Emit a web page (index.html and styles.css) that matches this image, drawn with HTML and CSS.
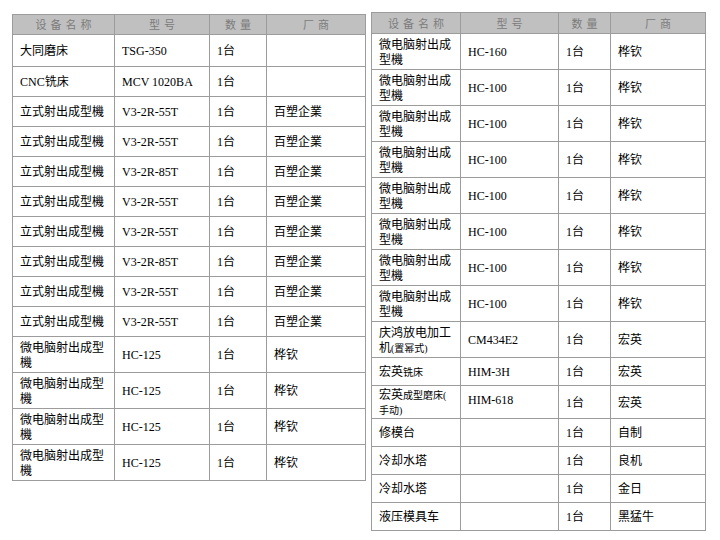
FILE: index.html
```html
<!DOCTYPE html>
<html lang="zh">
<head>
<meta charset="utf-8">
<title>设备清单</title>
<link rel="stylesheet" href="styles.css">
</head>
<body>
<div class="page">
  <table class="eq eq-left">
    <colgroup><col class="l1"><col class="l2"><col class="l3"><col class="l4"></colgroup>
    <thead>
      <tr class="hd-l"><th>设备名称</th><th>型号</th><th>数量</th><th>厂商</th></tr>
    </thead>
    <tbody>
      <tr class="r32"><td>大同磨床</td><td>TSG-350</td><td>1台</td><td></td></tr>
      <tr class="r30"><td>CNC铣床</td><td>MCV 1020BA</td><td>1台</td><td></td></tr>
      <tr class="r30"><td>立式射出成型機</td><td>V3-2R-55T</td><td>1台</td><td>百塑企業</td></tr>
      <tr class="r30"><td>立式射出成型機</td><td>V3-2R-55T</td><td>1台</td><td>百塑企業</td></tr>
      <tr class="r30"><td>立式射出成型機</td><td>V3-2R-85T</td><td>1台</td><td>百塑企業</td></tr>
      <tr class="r30"><td>立式射出成型機</td><td>V3-2R-55T</td><td>1台</td><td>百塑企業</td></tr>
      <tr class="r30"><td>立式射出成型機</td><td>V3-2R-55T</td><td>1台</td><td>百塑企業</td></tr>
      <tr class="r30"><td>立式射出成型機</td><td>V3-2R-85T</td><td>1台</td><td>百塑企業</td></tr>
      <tr class="r30"><td>立式射出成型機</td><td>V3-2R-55T</td><td>1台</td><td>百塑企業</td></tr>
      <tr class="r30"><td>立式射出成型機</td><td>V3-2R-55T</td><td>1台</td><td>百塑企業</td></tr>
      <tr class="r36"><td>微电脑射出成型機</td><td>HC-125</td><td>1台</td><td>桦钦</td></tr>
      <tr class="r36"><td>微电脑射出成型機</td><td>HC-125</td><td>1台</td><td>桦钦</td></tr>
      <tr class="r36"><td>微电脑射出成型機</td><td>HC-125</td><td>1台</td><td>桦钦</td></tr>
      <tr class="r36"><td>微电脑射出成型機</td><td>HC-125</td><td>1台</td><td>桦钦</td></tr>
    </tbody>
  </table>

  <table class="eq eq-right">
    <colgroup><col class="r1"><col class="r2"><col class="r3"><col class="r4"></colgroup>
    <thead>
      <tr class="hd-r"><th>设备名称</th><th>型号</th><th>数量</th><th>厂商</th></tr>
    </thead>
    <tbody>
      <tr class="r36"><td>微电脑射出成型機</td><td>HC-160</td><td>1台</td><td>桦钦</td></tr>
      <tr class="r36"><td>微电脑射出成型機</td><td>HC-100</td><td>1台</td><td>桦钦</td></tr>
      <tr class="r36"><td>微电脑射出成型機</td><td>HC-100</td><td>1台</td><td>桦钦</td></tr>
      <tr class="r36"><td>微电脑射出成型機</td><td>HC-100</td><td>1台</td><td>桦钦</td></tr>
      <tr class="r36"><td>微电脑射出成型機</td><td>HC-100</td><td>1台</td><td>桦钦</td></tr>
      <tr class="r36"><td>微电脑射出成型機</td><td>HC-100</td><td>1台</td><td>桦钦</td></tr>
      <tr class="r36"><td>微电脑射出成型機</td><td>HC-100</td><td>1台</td><td>桦钦</td></tr>
      <tr class="r36"><td>微电脑射出成型機</td><td>HC-100</td><td>1台</td><td>桦钦</td></tr>
      <tr class="r36"><td>庆鸿放电加工<br>机<span class="sm">(置幂式)</span></td><td>CM434E2</td><td>1台</td><td>宏英</td></tr>
      <tr class="r28"><td>宏英<span class="sm">铣床</span></td><td>HIM-3H</td><td>1台</td><td>宏英</td></tr>
      <tr class="r33"><td>宏英<span class="sm">成型磨床(<br>手动)</span></td><td class="top">HIM-618</td><td>1台</td><td>宏英</td></tr>
      <tr class="r28"><td>修模台</td><td></td><td>1台</td><td>自制</td></tr>
      <tr class="r28"><td>冷却水塔</td><td></td><td>1台</td><td>良机</td></tr>
      <tr class="r28"><td>冷却水塔</td><td></td><td>1台</td><td>金日</td></tr>
      <tr class="r28"><td>液压模具车</td><td></td><td>1台</td><td>黑猛牛</td></tr>
    </tbody>
  </table>
</div>
</body>
</html>
```

FILE: styles.css
```css
html, body {
  margin: 0;
  padding: 0;
  background: #ffffff;
}

.page {
  display: flex;
  align-items: flex-start;
  gap: 5px;
  padding-left: 12px;
}

.eq {
  table-layout: fixed;
  border-collapse: separate;
  border-spacing: 0;
  border-top: 1px solid #9c9c9c;
  border-left: 1px solid #9c9c9c;
  font-family: "Liberation Serif", "Noto Sans CJK SC", serif;
  font-size: 12px;
  line-height: 15px;
  color: #000000;
}

.eq-left {
  width: 354px;
  margin-top: 14px;
}

.eq-right {
  width: 335px;
  margin-top: 12px;
}

.l1 { width: 102px; }
.l2 { width: 95px; }
.l3 { width: 57px; }
.l4 { width: 99px; }

.r1 { width: 89px; }
.r2 { width: 98px; }
.r3 { width: 52px; }
.r4 { width: 95px; }

.eq th,
.eq td {
  border-right: 1px solid #9c9c9c;
  border-bottom: 1px solid #9c9c9c;
  padding: 2px 4px 0 7px;
  vertical-align: middle;
  text-align: left;
  overflow: hidden;
}

.eq th {
  background: #c0c0c0;
  color: #7c7c7c;
  font-family: "Noto Sans CJK SC", sans-serif;
  font-weight: normal;
  font-size: 11px;
  letter-spacing: 4px;
  text-align: center;
  padding: 0 0 0 4px;
}

.hd-l { height: 20px; }
.hd-r { height: 21px; }
.r28 { height: 28px; }
.r30 { height: 30px; }
.r32 { height: 32px; }
.r33 { height: 33px; }
.r36 { height: 36px; }

.eq td.top {
  vertical-align: top;
  padding-top: 7px;
}

.sm {
  font-size: 10px;
  line-height: 13px;
}
```
